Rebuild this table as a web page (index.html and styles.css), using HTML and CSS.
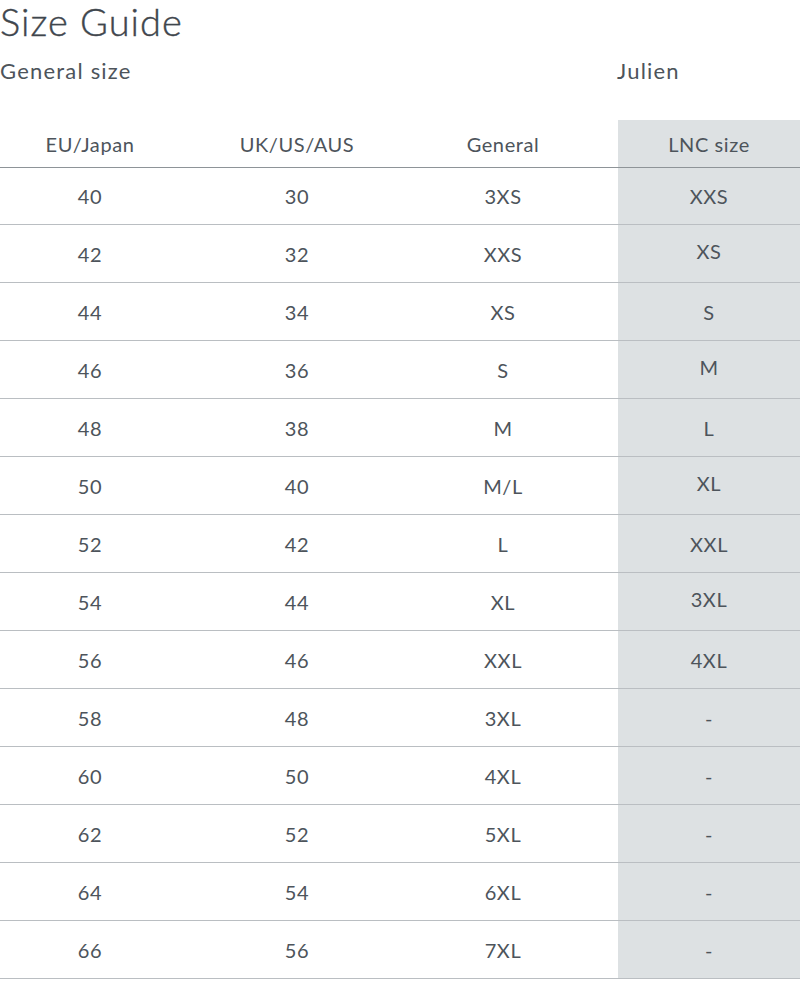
FILE: index.html
```html
<!DOCTYPE html>
<html>
<head>
<meta charset="utf-8">
<link rel="stylesheet" href="styles.css">
</head>
<body>
<h1 class="title">Size Guide</h1>
<div class="labels">
  <span class="label-general">General size</span>
  <span class="label-brand">Julien</span>
</div>
<div class="size-table">
  <div class="row head">
    <div class="cell c1">EU/Japan</div>
    <div class="cell c2">UK/US/AUS</div>
    <div class="cell c3">General</div>
    <div class="cell c4">LNC size</div>
  </div>
  <div class="row first"><div class="cell c1">40</div><div class="cell c2">30</div><div class="cell c3">3XS</div><div class="cell c4">XXS</div></div>
  <div class="row"><div class="cell c1">42</div><div class="cell c2">32</div><div class="cell c3">XXS</div><div class="cell c4 up">XS</div></div>
  <div class="row"><div class="cell c1">44</div><div class="cell c2">34</div><div class="cell c3">XS</div><div class="cell c4">S</div></div>
  <div class="row"><div class="cell c1">46</div><div class="cell c2">36</div><div class="cell c3">S</div><div class="cell c4 up">M</div></div>
  <div class="row"><div class="cell c1">48</div><div class="cell c2">38</div><div class="cell c3">M</div><div class="cell c4">L</div></div>
  <div class="row"><div class="cell c1">50</div><div class="cell c2">40</div><div class="cell c3">M/L</div><div class="cell c4 up">XL</div></div>
  <div class="row"><div class="cell c1">52</div><div class="cell c2">42</div><div class="cell c3">L</div><div class="cell c4">XXL</div></div>
  <div class="row"><div class="cell c1">54</div><div class="cell c2">44</div><div class="cell c3">XL</div><div class="cell c4 up">3XL</div></div>
  <div class="row"><div class="cell c1">56</div><div class="cell c2">46</div><div class="cell c3">XXL</div><div class="cell c4">4XL</div></div>
  <div class="row"><div class="cell c1">58</div><div class="cell c2">48</div><div class="cell c3">3XL</div><div class="cell c4">-</div></div>
  <div class="row"><div class="cell c1">60</div><div class="cell c2">50</div><div class="cell c3">4XL</div><div class="cell c4">-</div></div>
  <div class="row"><div class="cell c1">62</div><div class="cell c2">52</div><div class="cell c3">5XL</div><div class="cell c4">-</div></div>
  <div class="row"><div class="cell c1">64</div><div class="cell c2">54</div><div class="cell c3">6XL</div><div class="cell c4">-</div></div>
  <div class="row"><div class="cell c1">66</div><div class="cell c2">56</div><div class="cell c3">7XL</div><div class="cell c4">-</div></div>
</div>
</body>
</html>
```
FILE: styles.css
```css
html, body {
  margin: 0;
  padding: 0;
  background: #ffffff;
}
body {
  width: 800px;
  font-family: Lato, "Open Sans", sans-serif;
  color: #4d545b;
}
.title {
  margin: 0;
  font-weight: 300;
  font-size: 38px;
  line-height: 42px;
  height: 45px;
  letter-spacing: 1px;
  color: #3f464d;
  -webkit-text-stroke: 0.4px #3f464d;
}
.labels {
  display: flex;
  align-items: center;
  height: 50px;
  font-size: 22px;
  letter-spacing: 1.2px;
  margin-bottom: 25px;
}
.label-general {
  width: 617px;
}
.size-table {
  display: flex;
  flex-direction: column;
}
.row {
  display: grid;
  grid-template-columns: 180px 234px 204px 182px;
  height: 57px;
  border-bottom: 1px solid #babec2;
  font-size: 20px;
  letter-spacing: 0.6px;
}
.row.head {
  height: 47px;
  border-bottom: 1px solid #8e9498;
}
.row.first {
  height: 56px;
}
.cell {
  display: flex;
  align-items: center;
  justify-content: center;
}
.c3 {
  padding-right: 26px;
}
.c4 {
  background: #dde1e3;
}
.c4.up {
  padding-bottom: 5px;
}
```
